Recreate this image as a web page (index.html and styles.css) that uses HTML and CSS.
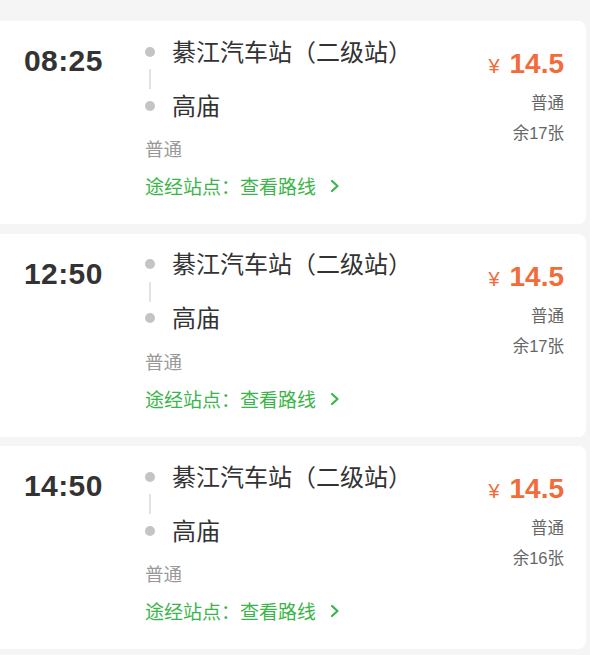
FILE: index.html
```html
<!DOCTYPE html>
<html lang="zh-CN">
<head>
    <meta charset="UTF-8">
    <meta name="viewport" content="width=device-width, initial-scale=1.0">
    <title>班次列表</title>
    <link rel="stylesheet" href="styles.css">
</head>
<body>
    <div class="list">
        <div class="trip">
            <div class="time">08:25</div>
            <div class="route">
                <div class="stop"><span class="dot"></span>綦江汽车站（二级站）</div>
                <div class="connector"></div>
                <div class="stop"><span class="dot"></span>高庙</div>
                <div class="type">普通</div>
                <a class="via" href="#">途经站点：查看路线
                    <svg width="10" height="14" viewBox="0 0 10 14"><path d="M2 2 L7.5 7 L2 12" fill="none" stroke="#3bb54a" stroke-width="2.2" stroke-linecap="round" stroke-linejoin="round"/></svg>
                </a>
            </div>
            <div class="fare">
                <div class="price"><span class="yen">¥</span>14.5</div>
                <div class="seat">普通</div>
                <div class="seat">余17张</div>
            </div>
        </div>
        <div class="trip">
            <div class="time">12:50</div>
            <div class="route">
                <div class="stop"><span class="dot"></span>綦江汽车站（二级站）</div>
                <div class="connector"></div>
                <div class="stop"><span class="dot"></span>高庙</div>
                <div class="type">普通</div>
                <a class="via" href="#">途经站点：查看路线
                    <svg width="10" height="14" viewBox="0 0 10 14"><path d="M2 2 L7.5 7 L2 12" fill="none" stroke="#3bb54a" stroke-width="2.2" stroke-linecap="round" stroke-linejoin="round"/></svg>
                </a>
            </div>
            <div class="fare">
                <div class="price"><span class="yen">¥</span>14.5</div>
                <div class="seat">普通</div>
                <div class="seat">余17张</div>
            </div>
        </div>
        <div class="trip">
            <div class="time">14:50</div>
            <div class="route">
                <div class="stop"><span class="dot"></span>綦江汽车站（二级站）</div>
                <div class="connector"></div>
                <div class="stop"><span class="dot"></span>高庙</div>
                <div class="type">普通</div>
                <a class="via" href="#">途经站点：查看路线
                    <svg width="10" height="14" viewBox="0 0 10 14"><path d="M2 2 L7.5 7 L2 12" fill="none" stroke="#3bb54a" stroke-width="2.2" stroke-linecap="round" stroke-linejoin="round"/></svg>
                </a>
            </div>
            <div class="fare">
                <div class="price"><span class="yen">¥</span>14.5</div>
                <div class="seat">普通</div>
                <div class="seat">余16张</div>
            </div>
        </div>
    </div>
</body>
</html>
```

FILE: styles.css
```css
body {
    margin: 0;
    background-color: #f5f5f5;
    font-family: "Liberation Sans", "Noto Sans CJK SC", sans-serif;
    color: #333;
}
.list {
    padding: 21px 4px 0 0;
}
.trip {
    display: flex;
    background-color: #fff;
    border-radius: 0 8px 8px 0;
    padding: 14px 22px 25px 24px;
    margin-bottom: 9.5px;
}
.time {
    width: 121px;
    flex-shrink: 0;
    margin-top: 9px;
    font-size: 30px;
    line-height: 34px;
    font-weight: bold;
    letter-spacing: 0.4px;
    color: #333;
}
.route {
    flex: 1;
}
.stop {
    display: flex;
    align-items: center;
    height: 30px;
    font-size: 24px;
    color: #333;
    font-family: "Noto Sans CJK SC", sans-serif;
}
.dot {
    width: 10px;
    height: 10px;
    border-radius: 50%;
    background-color: #c4c4c4;
    margin-right: 17px;
    margin-top: 3px;
}
.connector {
    width: 2px;
    height: 20px;
    margin: 4px 0 0 4px;
    background-color: #e3e3e3;
}
.type {
    margin-top: 16px;
    font-size: 18.5px;
    line-height: 26px;
    color: #999;
    font-family: "Noto Sans CJK SC", sans-serif;
}
.via {
    display: flex;
    align-items: center;
    margin-top: 12px;
    font-size: 19px;
    line-height: 26px;
    color: #3bb54a;
    text-decoration: none;
    font-family: "Noto Sans CJK SC", sans-serif;
}
.via svg {
    margin-left: 14px;
}
.fare {
    text-align: right;
}
.price {
    margin-top: 12px;
    font-size: 28px;
    line-height: 34px;
    font-weight: bold;
    color: #f26b3a;
}
.yen {
    font-size: 20px;
    font-weight: normal;
    margin-right: 10px;
}
.seat {
    font-size: 16.5px;
    line-height: 24px;
    color: #666;
}
.price + .seat {
    margin-top: 8px;
}
.seat + .seat {
    margin-top: 6px;
}
```
